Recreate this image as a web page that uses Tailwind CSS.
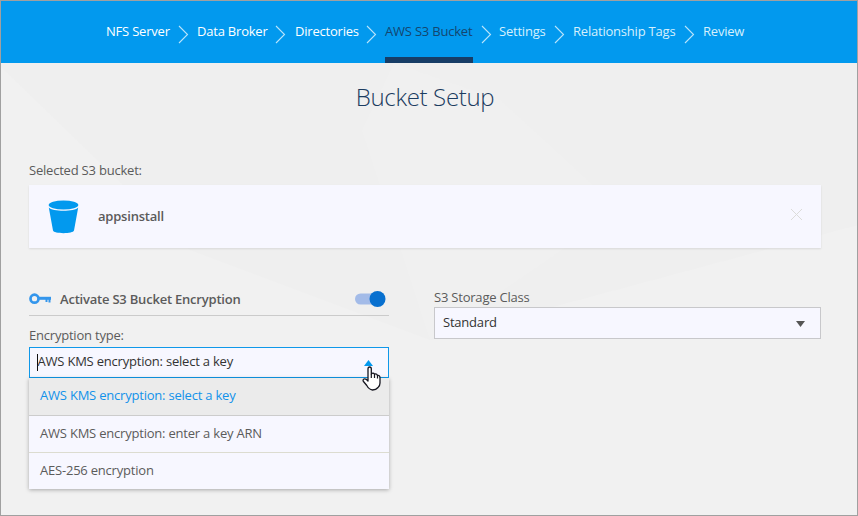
<!DOCTYPE html>
<html lang="en">
<head>
<meta charset="utf-8">
<title>Bucket Setup</title>
<script src="https://cdn.jsdelivr.net/npm/@tailwindcss/browser@4"></script>
</head>
<body class="w-[858px] h-[516px] overflow-hidden">
<div class="relative isolate w-[858px] h-[516px] border border-[#a0a0a0] bg-[#efefef] font-['Open_Sans',sans-serif] text-[13px] leading-[18px] tracking-[-0.21px] text-[#5b5b5b] overflow-hidden">
  <svg class="absolute inset-0 -z-10" width="856" height="514" viewBox="1 1 856 514"><path d="M0 66L190 250L430 340L858 225V516H0Z" fill="#f1f1f1"/><path d="M394 63L362 130L430 340L620 210L500 100Z" fill="#f0f0f0"/></svg>
  <header class="h-[62px] bg-[#0299ee] pl-[105px]">
    <nav class="flex h-full text-white whitespace-nowrap">
      <div class="w-[64px] pt-[21px]">NFS Server</div>
      <svg class="w-[27px] h-[62px] shrink-0" viewBox="0 0 27 62" fill="none" stroke="#b9e4fb" stroke-width="1.1"><path d="M9 25L17.5 33.5L9 42"/></svg>
      <div class="w-[71px] pt-[21px]">Data Broker</div>
      <svg class="w-[27px] h-[62px] shrink-0" viewBox="0 0 27 62" fill="none" stroke="#b9e4fb" stroke-width="1.1"><path d="M8 25L16.5 33.5L8 42"/></svg>
      <div class="w-[64px] pt-[21px]">Directories</div>
      <svg class="w-[26px] h-[62px] shrink-0" viewBox="0 0 26 62" fill="none" stroke="#b9e4fb" stroke-width="1.1"><path d="M8 25L16.5 33.5L8 42"/></svg>
      <div class="w-[88px] pt-[21px] border-b-[6px] border-[#173d66] text-[#14466f]">AWS S3 Bucket</div>
      <svg class="w-[26px] h-[62px] shrink-0" viewBox="0 0 26 62" fill="none" stroke="#b9e4fb" stroke-width="1.1"><path d="M9 25L17.5 33.5L9 42"/></svg>
      <div class="w-[47px] pt-[21px] text-[#d5f0fd]">Settings</div>
      <svg class="w-[27px] h-[62px] shrink-0" viewBox="0 0 27 62" fill="none" stroke="#b9e4fb" stroke-width="1.1"><path d="M9 25L17.5 33.5L9 42"/></svg>
      <div class="w-[103px] pt-[21px] text-[#d5f0fd]">Relationship Tags</div>
      <svg class="w-[27px] h-[62px] shrink-0" viewBox="0 0 27 62" fill="none" stroke="#b9e4fb" stroke-width="1.1"><path d="M9 25L17.5 33.5L9 42"/></svg>
      <div class="w-[43px] pt-[21px] text-[#d5f0fd]">Review</div>
    </nav>
  </header>
  <main class="pl-[28px] pr-[36px]">
    <h1 class="pt-[18px] h-[98px] text-center text-[24px] leading-[32px] tracking-[-0.33px] font-light text-[#1b3c60]">Bucket Setup</h1>
    <div class="h-[24px]">Selected S3 bucket:</div>
    <section class="flex items-center h-[63px] bg-[#f7f7ff] pl-[19px] pr-[18px] shadow-[0_1px_2px_rgba(0,0,0,0.10)]">
      <svg width="31" height="34" viewBox="0 0 31 34"><path d="M.8 7.5C4 11.8 27 11.8 30.2 7.5L26 30.5C25.5 34 5.5 34 5 30.5Z" fill="#0299ee"/><ellipse cx="15.5" cy="5" rx="14.8" ry="4.6" fill="#0299ee"/></svg>
      <span class="ml-[19px] -mt-[2px] grow font-semibold">appsinstall</span>
      <svg class="-mt-[4px]" width="13" height="13" viewBox="0 0 13 13" stroke="#dcdcda" fill="none"><path d="M1 1L12 12M12 1L1 12"/></svg>
    </section>
    <div class="flex gap-[45px] pt-[42px]">
      <section class="w-[360px]">
        <div class="flex items-center h-[25px] mt-[1px] border-b border-[#cbcbcb] pb-[8px] mb-[10px]">
          <svg width="23" height="12" viewBox="0 0 23 12" fill="none" stroke="#3496ec"><circle cx="5.5" cy="5.7" r="4" stroke-width="2.7"/><path d="M10 5.3H22" stroke-width="3"/><path d="M17.5 6V9M20.5 6V9.5" stroke-width="2"/></svg>
          <span class="ml-[8px] grow font-semibold whitespace-nowrap">Activate S3 Bucket Encryption</span>
          <svg class="mr-[3px]" width="31" height="18" viewBox="0 0 31 18"><rect x="0" y="3.5" width="27" height="11" rx="5.5" fill="#a3bbe8"/><circle cx="22.5" cy="9" r="8" fill="#0870cf"/></svg>
        </div>
        <div class="h-[21px]">Encryption type:</div>
        <div class="relative h-[32px]">
          <div class="flex items-center h-[31px] border border-[#0f98e9] bg-[#f7f7ff] pl-[7px] pr-[15px] text-[#333]">
            <span class="h-[17px] w-px bg-[#111]"></span>
            <span class="grow whitespace-nowrap -ml-[0.5px] -mt-[3px]">AWS KMS encryption: select a key</span>
            <svg width="9" height="6" viewBox="0 0 9 6"><path d="M4.5 0L9 6H0Z" fill="#0299ee"/></svg>
          </div>
          <div class="absolute left-0 top-[31px] w-[360px] bg-[#f7f7ff] shadow-[0_1px_4px_rgba(0,0,0,0.30)]">
            <div class="h-[38px] bg-[#ebebeb] border-b border-[#cccccc] pl-[11px] pt-[8px] text-[#1292ea]">AWS KMS encryption: select a key</div>
            <div class="h-[37px] border-b border-[#dcdcd0] pl-[11px] pt-[8px]">AWS KMS encryption: enter a key ARN</div>
            <div class="h-[36px] pl-[11px] pt-[8px]">AES-256 encryption</div>
          </div>
          <svg class="absolute left-[333px] top-[19px]" width="19" height="25" viewBox="0 0 19 25"><path d="M6 14V3Q6 1 7.7 1Q9.3 1 9.3 3V8Q11 6.2 12.6 8.2Q14.5 7.3 15.5 9.4Q18 9 18 12V17Q18 20 16 21.5Q14 24 10.5 24Q7 23.5 4.8 19.5L1.5 15.5Q.4 14 2 13Q3.7 12.2 6 15Z" fill="#fff" stroke="#15151f" stroke-width="1.3" stroke-linejoin="round"/><path d="M9.3 8V12M12.5 8V12M15.5 9V12.5" stroke="#15151f" stroke-width="1.2"/></svg>
        </div>
      </section>
      <section class="w-[387px] -mt-[2px]">
        <div class="h-[19px]">S3 Storage Class</div>
        <div class="flex items-center h-[32px] border border-[#c8c8cb] bg-[#f7f7ff] pl-[8px] pr-[15px] text-[#333]">
          <span class="grow -mt-[2px]">Standard</span>
          <svg class="mt-[2px]" width="9" height="6" viewBox="0 0 9 6"><path d="M0 0H9L4.5 6Z" fill="#555"/></svg>
        </div>
      </section>
    </div>
  </main>
</div>
</body>
</html>
